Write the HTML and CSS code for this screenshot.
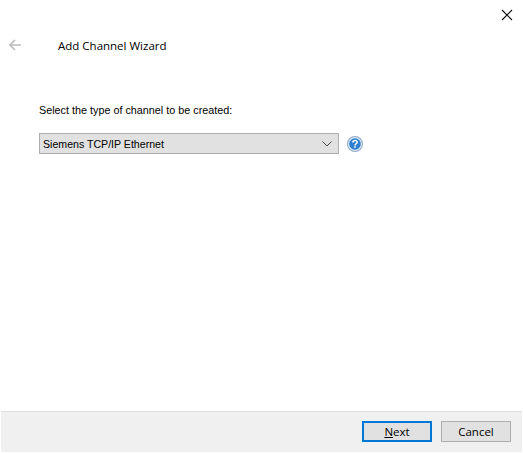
FILE: index.html
```html
<!doctype html>
<html lang="en">
    <head>
        <meta charset="UTF-8" />
        <title>Add Channel Wizard</title>
        <link rel="stylesheet" href="styles.css">
    </head>
    <body>
        <div class="wizard">
            <div class="close-row">
                <svg class="close-icon" width="12" height="12" viewBox="0 0 12 12">
                    <path d="M1 1 L11 11 M11 1 L1 11" stroke="#111" stroke-width="1.1" fill="none" />
                </svg>
            </div>
            <div class="header">
                <svg class="back-icon" width="12" height="12" viewBox="0 0 12 12">
                    <path d="M12 6 H1 M6 1 L1 6 L6 11" stroke="#bdbdbd" stroke-width="1.7" fill="none" />
                </svg>
                <span class="title">Add Channel Wizard</span>
            </div>
            <div class="content">
                <p class="prompt">Select the type of channel to be created:</p>
                <div class="combo-row">
                    <div class="combo">
                        <span class="combo-text">Siemens TCP/IP Ethernet</span>
                        <svg class="combo-arrow" width="10" height="6" viewBox="0 0 10 6">
                            <path d="M0.5 0.5 L5 5 L9.5 0.5" stroke="#444" stroke-width="1" fill="none" />
                        </svg>
                    </div>
                    <svg class="help-icon" width="16" height="16" viewBox="0 0 16 16">
                        <circle cx="8" cy="8" r="8" fill="#8fa9c6" />
                        <circle cx="8" cy="8" r="7" fill="#dbe8f5" />
                        <circle cx="8" cy="8" r="5.8" fill="#2f7fd0" />
                        <path d="M5.9 6.4 C5.9 4 10.2 4 10.2 6.3 C10.2 7.8 8 7.8 8 9.4" stroke="#fff" stroke-width="1.5" fill="none" />
                        <rect x="7.2" y="10.2" width="1.6" height="1.6" fill="#fff" />
                    </svg>
                </div>
            </div>
            <div class="footer">
                <button class="btn btn-default"><u>N</u>ext</button>
                <button class="btn">Cancel</button>
            </div>
        </div>
    </body>
</html>
```

FILE: styles.css
```css
html,
body {
    margin: 0;
    height: 100%;
}
body {
    background-color: #fff;
    color: #000;
    font-family: "Open Sans", "Liberation Sans", sans-serif;
    font-size: 12px;
}
.wizard {
    display: flex;
    flex-direction: column;
    height: 452px;
    width: 523px;
    overflow: hidden;
}
.close-row {
    display: flex;
    justify-content: flex-end;
    padding: 9px 10px 0 0;
    height: 21px;
    box-sizing: border-box;
}
.header {
    display: flex;
    align-items: center;
    height: 18px;
    margin-top: 15px;
    padding-left: 9px;
}
.back-icon {
    margin-right: 37px;
}
.title {
    font-size: 11.5px;
}
.content {
    flex: 1;
    padding: 49px 0 0 39px;
}
.prompt {
    margin: 0 0 15px 0;
    font-family: "Liberation Sans", Arial, sans-serif;
    font-size: 10.8px;
    line-height: 15px;
}
.combo-row {
    display: flex;
    align-items: center;
}
.combo {
    display: flex;
    align-items: center;
    justify-content: space-between;
    box-sizing: border-box;
    width: 300px;
    height: 21px;
    padding: 0 3px 0 3px;
    background-color: #e1e1e1;
    border: 1px solid #adadad;
    font-family: "Liberation Sans", Arial, sans-serif;
    font-size: 10.6px;
}
.combo-arrow {
    margin-right: 3px;
}
.help-icon {
    margin-left: 8px;
}
.footer {
    display: flex;
    justify-content: flex-end;
    gap: 9px;
    box-sizing: border-box;
    height: 41px;
    margin: 0 1px;
    padding: 9px 11px 0 0;
    background-color: #f0f0f0;
    border-top: 1px solid #dfdfdf;
}
.btn {
    box-sizing: border-box;
    width: 70px;
    height: 21px;
    padding: 0;
    background-color: #e1e1e1;
    border: 1px solid #adadad;
    color: #000;
    font-family: "Open Sans", "Liberation Sans", sans-serif;
    font-size: 11.5px;
}
.btn-default {
    border: 2px solid #0078d7;
}
```
